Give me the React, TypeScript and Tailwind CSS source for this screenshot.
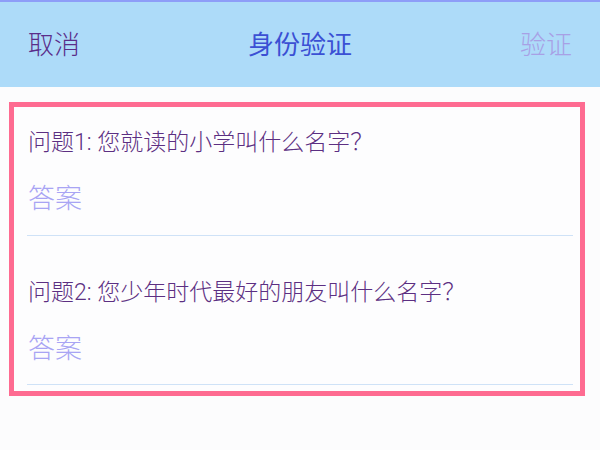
import React from "react";

const questions = [
  "问题1: 您就读的小学叫什么名字？",
  "问题2: 您少年时代最好的朋友叫什么名字？",
];

const App = () => {
  return (
    <div
      className="w-[600px] h-[450px] bg-[#fcfcfd] overflow-hidden"
      style={{ fontFamily: 'Roboto, "Noto Sans CJK SC", sans-serif' }}
    >
      <header className="h-[87px] bg-[#addbf9] border-t-2 border-[#8e9df8] flex items-center justify-between px-[28px]">
        <span className="text-[26px] leading-[30px] font-light text-[#5a2d8a]">取消</span>
        <span className="text-[26px] leading-[30px] font-normal text-[#3b50d4]">身份验证</span>
        <span className="text-[26px] leading-[30px] font-light text-[#a8a0e5]">验证</span>
      </header>

      <div className="mt-[15px] ml-[9px] mr-[15px] border-[5px] border-[#fe6b91] bg-[#fdfdfe] pl-[13px] pr-[7px] pb-[6px]">
        {questions.map((q, i) => (
          <div key={i} className={i === 0 ? "pt-[21px]" : "pt-[42px]"}>
            <div className="pl-px text-[23px] leading-[30px] font-light text-[#5c2f82]">{q}</div>
            <div className="mt-[26px] pl-px text-[27px] leading-[30px] font-light text-[#a8a4f4]">答案</div>
            <div className={i === 0 ? "mt-[21px] h-px bg-[#cfe2f7]" : "mt-[20px] h-px bg-[#cfe2f7]"} />
          </div>
        ))}
      </div>
    </div>
  );
};

export default App;
